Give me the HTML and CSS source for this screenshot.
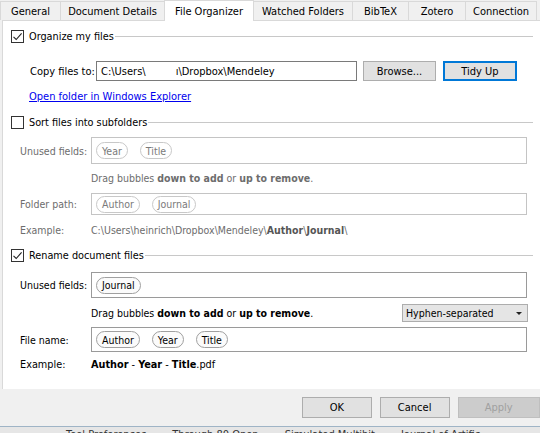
FILE: index.html
```html
<!DOCTYPE html>
<html>
<head>
<meta charset="utf-8">
<link rel="stylesheet" href="styles.css">
</head>
<body>
<div class="window">
  <div class="tabs">
    <div class="tab t-general">General</div>
    <div class="tab t-details">Document Details</div>
    <div class="tab active t-org">File Organizer</div>
    <div class="tab t-watch">Watched Folders</div>
    <div class="tab t-bib">BibTeX</div>
    <div class="tab t-zot">Zotero</div>
    <div class="tab t-conn">Connection</div>
  </div>
  <div class="panel">
    <div class="group-head g1">
      <span class="check on"><svg width="11" height="11" viewBox="0 0 11 11"><path d="M1.5 5.8 L4.2 8.5 L9.6 2.4" fill="none" stroke="#222" stroke-width="1.1"/></svg></span>
      <span class="head-label">Organize my files</span>
      <span class="head-line"></span>
    </div>
    <div class="row copy-row">
      <span class="copy-label">Copy files to:</span>
      <div class="input">C:\Users\<span class="redact"></span>ı\Dropbox\Mendeley</div>
      <div class="btn browse">Browse...</div>
      <div class="btn tidy">Tidy Up</div>
    </div>
    <div class="row link-row"><a class="link">Open folder in Windows Explorer</a></div>

    <div class="group-head g2">
      <span class="check"></span>
      <span class="head-label">Sort files into subfolders</span>
      <span class="head-line"></span>
    </div>
    <div class="row field-row r-unused1 disabled">
      <span class="label">Unused fields:</span>
      <div class="box"><span class="bubble">Year</span><span class="bubble">Title</span></div>
    </div>
    <div class="row hint-row r-drag1 disabled">
      <span class="hint">Drag bubbles <b>down to add</b> or <b>up to remove</b>.</span>
    </div>
    <div class="row field-row r-folder disabled">
      <span class="label">Folder path:</span>
      <div class="box"><span class="bubble">Author</span><span class="bubble">Journal</span></div>
    </div>
    <div class="row ex-row r-ex1 disabled">
      <span class="label">Example:</span>
      <span class="example">C:\Users\heinrich\Dropbox\Mendeley\<b>Author</b>\<b>Journal</b>\</span>
    </div>

    <div class="group-head g3">
      <span class="check on"><svg width="11" height="11" viewBox="0 0 11 11"><path d="M1.5 5.8 L4.2 8.5 L9.6 2.4" fill="none" stroke="#222" stroke-width="1.1"/></svg></span>
      <span class="head-label">Rename document files</span>
      <span class="head-line"></span>
    </div>
    <div class="row field-row r-unused2">
      <span class="label">Unused fields:</span>
      <div class="box"><span class="bubble">Journal</span></div>
    </div>
    <div class="row hint-row r-drag2">
      <span class="hint">Drag bubbles <b>down to add</b> or <b>up to remove</b>.</span>
      <div class="select">Hyphen-separated<span class="arrow"></span></div>
    </div>
    <div class="row field-row r-file">
      <span class="label">File name:</span>
      <div class="box"><span class="bubble">Author</span><span class="bubble">Year</span><span class="bubble">Title</span></div>
    </div>
    <div class="row ex-row r-ex2">
      <span class="label">Example:</span>
      <span class="example"><b>Author</b> - <b>Year</b> - <b>Title</b>.pdf</span>
    </div>
  </div>
  <div class="footer">
    <div class="btn fbtn">OK</div>
    <div class="btn fbtn">Cancel</div>
    <div class="btn fbtn apply">Apply</div>
  </div>
  <div class="under">
    <span class="u1">Tool Preferences</span><span class="u2">Through 80 Open</span><span class="u3">Simulated Multihit</span><span class="u4">Journal of Artific</span>
  </div>
</div>
</body>
</html>
```
FILE: styles.css
```css
* { box-sizing: border-box; }
html, body { margin: 0; padding: 0; }
body {
  width: 540px; height: 433px; overflow: hidden;
  background: #f0f0f0;
  font-family: "DejaVu Sans Condensed", "DejaVu Sans", sans-serif;
  font-size: 10.5px; color: #000;
}
.window { width: 540px; height: 433px; display: flex; flex-direction: column; }

.tabs { height: 20px; display: flex; align-items: flex-end; position: relative; z-index: 1; font-size: 11px; }
.tab {
  height: 19px; display: flex; align-items: center; justify-content: center;
  background: #f0f0f0; border: 1px solid #d9d9d9; border-bottom: none; margin-right: -1px;
  color: #000; padding-top: 1px;
}
.tab.active { height: 21px; background: #fff; margin-bottom: -1px; padding-top: 0; }
.t-general { width: 61px; }
.t-details { width: 105px; }
.t-org { width: 90px; }
.t-watch { width: 100px; }
.t-bib { width: 57px; }
.t-zot { width: 58px; }
.t-conn { width: 72px; }

.panel {
  height: 369px; margin-left: 2px; background: #fff;
  border-top: 1px solid #d9d9d9; border-left: 1px solid #d9d9d9;
  padding-top: 7px;
  display: flex; flex-direction: column;
}

.group-head { height: 17px; display: flex; align-items: center; padding-left: 8px; padding-right: 7px; font-size: 10.8px; }
.check {
  width: 13px; height: 13px; border: 1px solid #333; background: #fff;
  display: flex; align-items: center; justify-content: center; flex: none;
}
.head-label { margin-left: 5px; white-space: nowrap; }
.head-line { flex: 1; height: 1px; background: #c8c8c8; margin-left: 1px; }

.row { display: flex; align-items: center; }
.copy-row { margin-top: 16px; height: 20px; padding-left: 27px; font-size: 11px; }
.copy-label { width: 66px; }
.input {
  width: 261px; height: 20px; border: 1px solid #7a7a7a; padding-left: 4px;
  display: flex; align-items: center; white-space: nowrap;
}
.redact { display: inline-block; width: 30px; }
.btn {
  height: 20px; display: flex; align-items: center; justify-content: center;
  background: #e1e1e1; border: 1px solid #adadad;
}
.browse { width: 73px; margin-left: 6px; }
.tidy { width: 74px; margin-left: 7px; border: 2px solid #0078d7; background: #e1e1e1; }

.link-row { margin-top: 7px; height: 16px; padding-left: 26px; font-size: 11px; }
.link { color: #0000ee; text-decoration: underline; }

.g2 { margin-top: 10px; }
.field-row { padding-left: 17px; }
.label { width: 71px; flex: none; }
.box {
  width: 436px; height: 100%; border: 1px solid #9a9a9a;
  display: flex; align-items: center; padding-left: 4px; gap: 12px;
}
.bubble {
  height: 17px; padding: 0 5px; border: 1px solid #a0a0a0; border-radius: 9px;
  display: flex; align-items: center; background: #fbfbfb;
}
.r-unused1 { margin-top: 6px; height: 27px; }
.hint-row { padding-left: 88px; height: 16px; }
.r-drag1 { margin-top: 6px; }
.r-folder { margin-top: 7px; height: 22px; }
.ex-row { height: 16px; padding-left: 17px; }
.r-ex1 { margin-top: 7px; }

.disabled { color: #6d6d6d; }
.disabled .box { border-color: #c4c4c4; }
.disabled .bubble { border-color: #c8c8c8; color: #7a7a7a; background: #fff; }
.disabled .example b { color: #555; }

.g3 { margin-top: 9px; }
.r-unused2 { margin-top: 8px; height: 26px; }
.r-drag2 { margin-top: 6px; height: 18px; }
.hint { flex: 1; }
.select {
  width: 126px; height: 18px; margin-right: 12px; background: #e5e5e5; border: 1px solid #adadad;
  display: flex; align-items: center; padding-left: 3px; position: relative;
}
.arrow {
  position: absolute; right: 5px; top: 7px; width: 0; height: 0;
  border-left: 3px solid transparent; border-right: 3px solid transparent; border-top: 3px solid #222;
}
.r-file { margin-top: 5px; height: 25px; }
.r-ex2 { margin-top: 4px; font-size: 10.8px; }

.footer { height: 37px; display: flex; align-items: center; padding-left: 302px; gap: 8px; font-size: 11px; }
.fbtn { width: 71px; height: 21px; }
.apply { width: 84px; background: #cccccc; border-color: #bfbfbf; color: #a0a0a0; }

.under {
  flex: 1; border-top: 1px solid #9fb4c6; background: #e6e6e6;
  white-space: nowrap; overflow: hidden; font-size: 11px; line-height: 11px; color: #333;
  padding-left: 66px; padding-top: 2px;
}
.under span { margin-right: 26px; }
```
